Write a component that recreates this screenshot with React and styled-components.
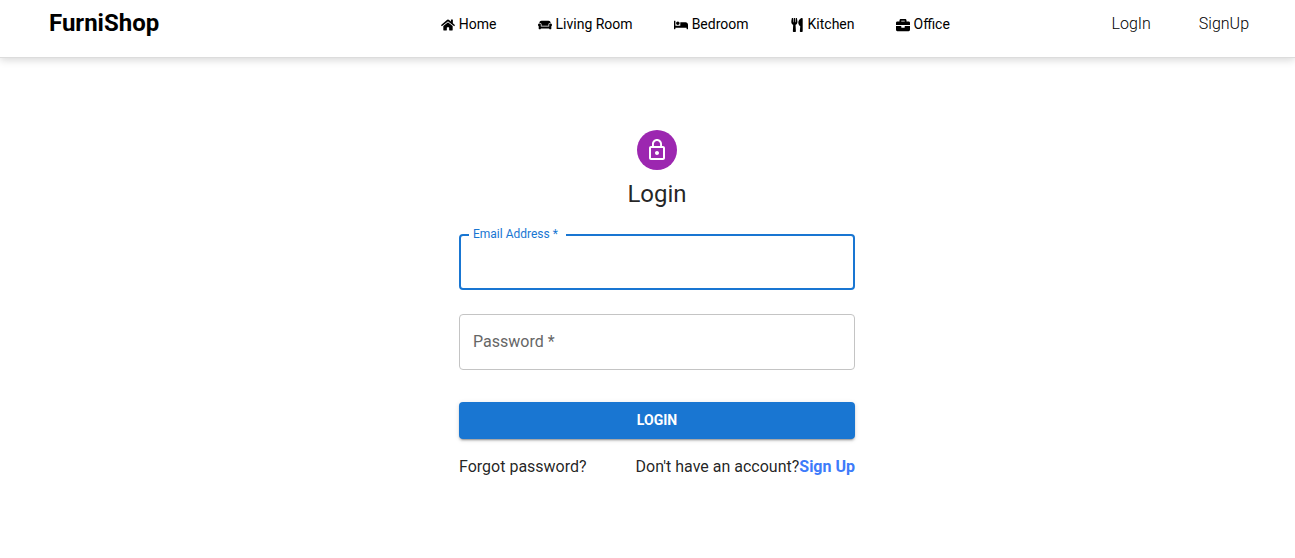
import React from "react";
import styled, { createGlobalStyle } from "styled-components";
import { FaHome, FaCouch, FaBed, FaUtensils, FaBriefcase } from "react-icons/fa";

const GlobalStyle = createGlobalStyle`
  *, *::before, *::after { box-sizing: border-box; }
  body {
    margin: 0;
    background: #fff;
    color: rgba(0, 0, 0, 0.87);
    font-family: Roboto, "Liberation Sans", sans-serif;
    font-size: 16px;
    line-height: 24px;
  }
`;

const Header = styled.header`
  display: flex;
  align-items: center;
  justify-content: space-between;
  padding: 8px 46px 17px 49px;
  border-bottom: 1px solid #dcdcdc;
  box-shadow: 0 2px 8px rgba(0, 0, 0, 0.16);
`;

const Brand = styled.a`
  padding-bottom: 2px;
  color: #000;
  font-size: 24px;
  font-weight: 700;
  line-height: 30px;
  text-decoration: none;
`;

const Nav = styled.nav`
  display: flex;
  gap: 41px;
  padding-left: 120px;
`;

const NavLink = styled.a`
  display: flex;
  align-items: center;
  gap: 4px;
  color: #000;
  font-size: 14px;
  text-decoration: none;

  svg {
    margin-top: 2px;
  }
`;

const Account = styled.div`
  display: flex;
  gap: 48px;
`;

const AccountLink = styled.a`
  color: #000;
  font-weight: 300;
  text-decoration: none;
`;

const Main = styled.main`
  display: flex;
  justify-content: center;
  padding: 72px 0 56px 19px;
`;

const Form = styled.form`
  display: flex;
  flex-direction: column;
  width: 100%;
  max-width: 396px;
`;

const Avatar = styled.div`
  display: grid;
  place-items: center;
  align-self: center;
  width: 40px;
  height: 40px;
  border-radius: 50%;
  background: #9c27b0;
  color: #fff;
`;

const Title = styled.h1`
  margin: 8px 0 16px;
  font-size: 24px;
  font-weight: 400;
  line-height: 32px;
  text-align: center;
`;

const Field = styled.div`
  position: relative;
  height: 56px;
  margin: 8px 0 16px;
`;

const Input = styled.input`
  width: 100%;
  height: 100%;
  padding: 16px 14px;
  border: ${(p) => (p.$active ? "2px solid #1976d2" : "1px solid #c4c4c4")};
  border-radius: 4px;
  outline: none;
  background: transparent;
  font: inherit;
`;

const Label = styled.label`
  position: absolute;
  top: ${(p) => (p.$floating ? "-8px" : "16px")};
  left: ${(p) => (p.$floating ? "10px" : "14px")};
  padding: ${(p) => (p.$floating ? "0 8px 0 4px" : "0")};
  background: #fff;
  color: ${(p) => (p.$floating ? "#1976d2" : "#666")};
  font-size: ${(p) => (p.$floating ? "12px" : "16px")};
  line-height: ${(p) => (p.$floating ? "16px" : "24px")};
`;

const Submit = styled.button`
  height: 37px;
  margin: 16px 0;
  padding: 0 16px 2px;
  border: 0;
  border-radius: 4px;
  background: #1976d2;
  box-shadow: 0 3px 1px -2px rgba(0, 0, 0, 0.2), 0 2px 2px rgba(0, 0, 0, 0.14),
    0 1px 5px rgba(0, 0, 0, 0.12);
  color: #fff;
  font-family: inherit;
  font-size: 14px;
  font-weight: 700;
  text-transform: uppercase;
`;

const FormFooter = styled.div`
  display: flex;
  justify-content: space-between;
`;

const TextLink = styled.a`
  color: ${(p) => (p.$accent ? "#3d7bfa" : "inherit")};
  font-weight: ${(p) => (p.$accent ? 700 : 400)};
  text-decoration: none;
`;

const LockIcon = () => (
  <svg width="24" height="24" viewBox="0 0 24 24" fill="currentColor" aria-hidden="true">
    <path d="M12 17c1.100 0 2-.9 2-2s-.9-2-2-2-2 .9-2 2 .9 2 2 2zm6-9h-1V6c0-2.760-2.240-5-5-5S7 3.240 7 6v2H6c-1.100 0-2 .9-2 2v10c0 1.100.9 2 2 2h12c1.100 0 2-.9 2-2V10c0-1.100-.9-2-2-2zM8.900 6c0-1.710 1.390-3.100 3.100-3.100s3.100 1.390 3.100 3.100v2H8.900V6zM18 20H6V10h12v10z" />
  </svg>
);

const rooms = [
  { name: "Home", Icon: FaHome },
  { name: "Living Room", Icon: FaCouch },
  { name: "Bedroom", Icon: FaBed },
  { name: "Kitchen", Icon: FaUtensils },
  { name: "Office", Icon: FaBriefcase },
];

export default function App() {
  return (
    <>
      <GlobalStyle />
      <Header>
        <Brand href="#home">FurniShop</Brand>
        <Nav>
          {rooms.map(({ name, Icon }) => (
            <NavLink key={name} href="#rooms">
              <Icon aria-hidden="true" />
              {name}
            </NavLink>
          ))}
        </Nav>
        <Account>
          <AccountLink href="#login">LogIn</AccountLink>
          <AccountLink href="#signup">SignUp</AccountLink>
        </Account>
      </Header>
      <Main>
        <Form onSubmit={(e) => e.preventDefault()}>
          <Avatar>
            <LockIcon />
          </Avatar>
          <Title>Login</Title>
          <Field>
            <Input id="email" type="email" required $active />
            <Label htmlFor="email" $floating>Email Address *</Label>
          </Field>
          <Field>
            <Input id="password" type="password" required />
            <Label htmlFor="password">Password *</Label>
          </Field>
          <Submit type="submit">Login</Submit>
          <FormFooter>
            <TextLink href="#forgot">Forgot password?</TextLink>
            <span>
              Don't have an account?
              <TextLink href="#signup" $accent>Sign Up</TextLink>
            </span>
          </FormFooter>
        </Form>
      </Main>
    </>
  );
}
